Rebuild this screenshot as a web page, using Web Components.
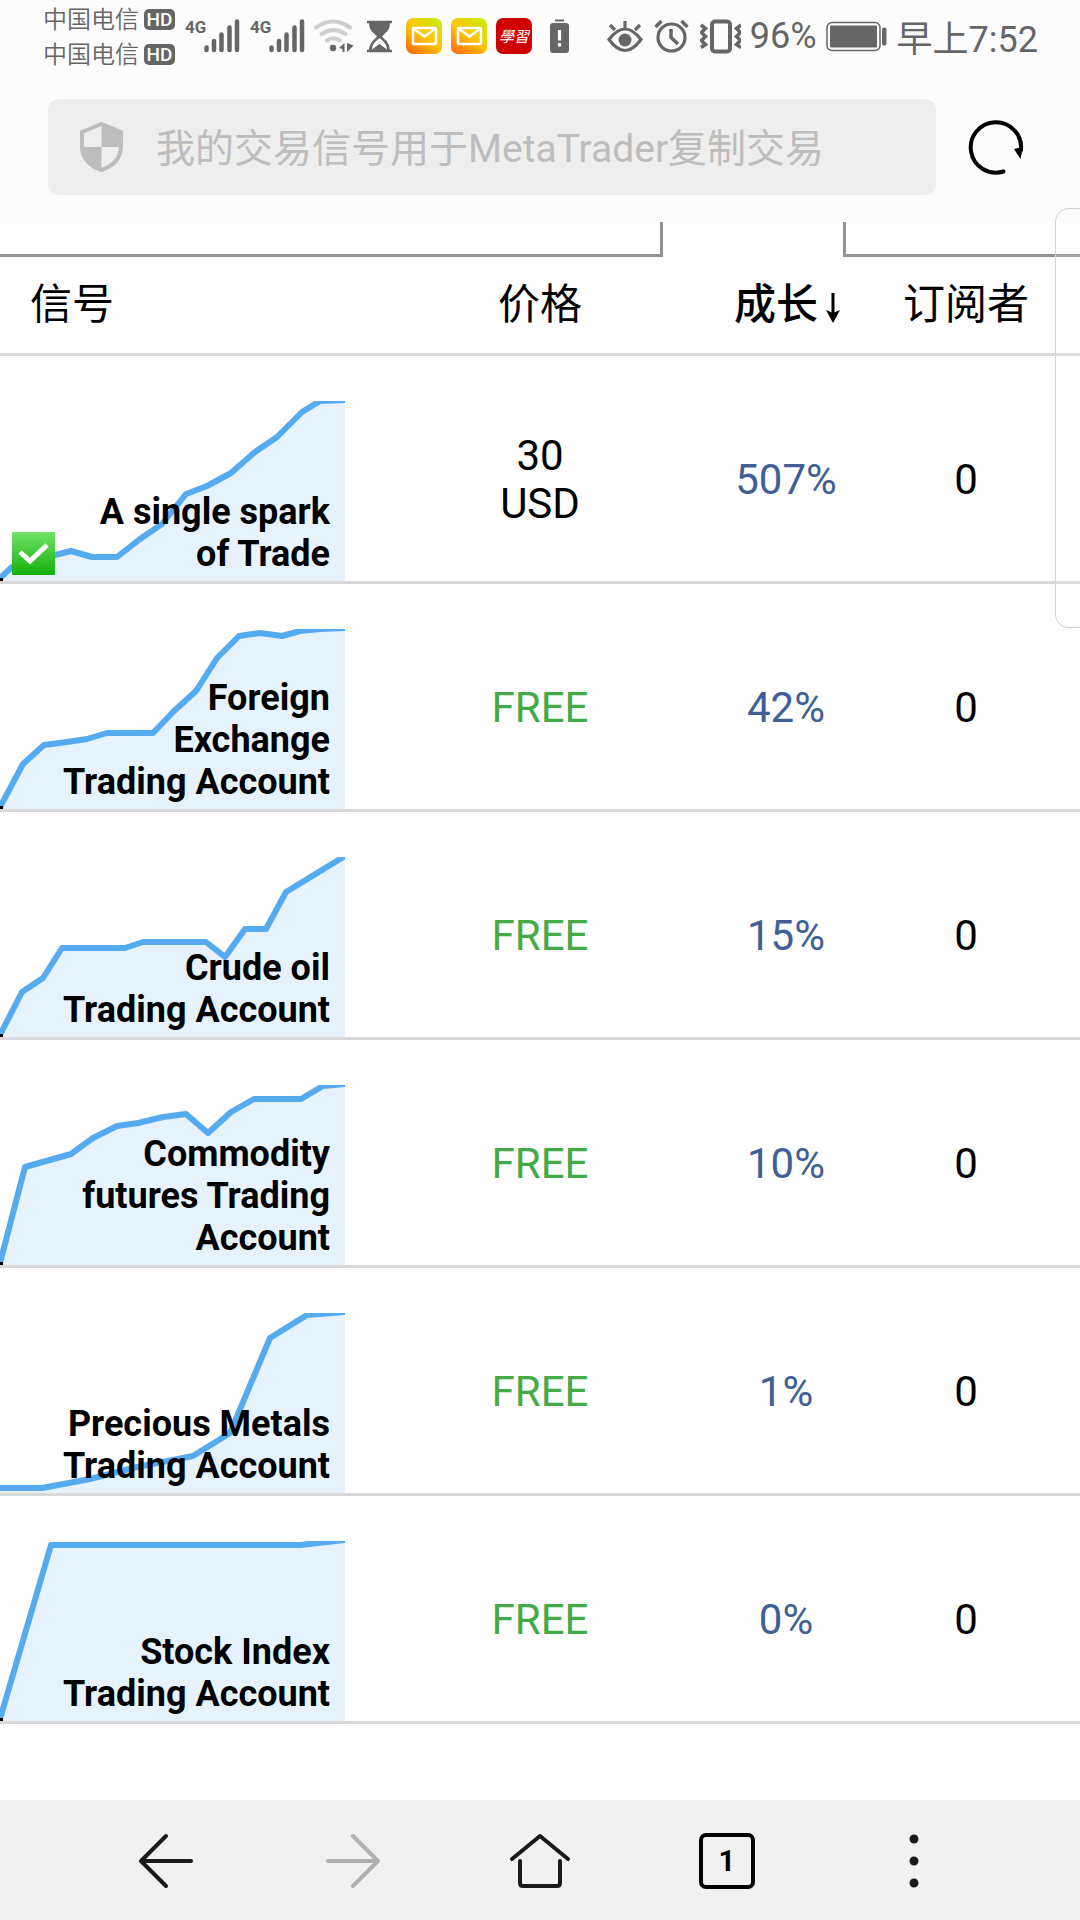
<!DOCTYPE html>
<html lang="zh-CN">
<head>
<meta charset="utf-8">
<meta name="viewport" content="width=device-width, initial-scale=1">
<title>我的交易信号用于MetaTrader复制交易</title>
<style>
    body {
        margin: 0;
        background: #fefefe;
        font-family: Roboto, "Noto Sans CJK SC", sans-serif;
    }
</style>
</head>
<body>

<app-shell>
    <status-bar slot="top"></status-bar>
    <address-bar slot="top" titulo="我的交易信号用于MetaTrader复制交易"></address-bar>
    <tab-strip></tab-strip>
    <signal-table></signal-table>
    <edge-panel></edge-panel>
    <tool-bar slot="bottom"></tool-bar>
</app-shell>

<script>
class Signal {
    constructor(name, price, growth, subscribers, points, verified = false) {
        this.name = name;
        this.price = price;
        this.growth = growth;
        this.subscribers = subscribers;
        this.points = points;
        this.verified = verified;
    }
}

const signals = [
    new Signal("A single spark of Trade", "30 USD", "507%", 0,
        "0,177 12,166 27,157 55,154 71,150 92,156 117,156 140,138 162,123 186,93 207,85 231,72 255,51 277,36 302,11 320,0 345,-1", true),
    new Signal("Foreign Exchange Trading Account", "FREE", "42%", 0,
        "0,178 23,135 44,116 67,113 87,110 107,104 153,104 173,83 196,62 217,29 239,7 260,4 282,7 300,2 320,0 345,-1"),
    new Signal("Crude oil Trading Account", "FREE", "15%", 0,
        "0,178 22,135 43,121 62,91 125,91 143,85 206,85 225,100 245,72 266,72 286,35 345,-1"),
    new Signal("Commodity futures Trading Account", "FREE", "10%", 0,
        "0,178 25,82 71,69 93,53 117,41 138,38 163,32 186,29 208,48 231,27 254,14 301,14 323,1 345,-1"),
    new Signal("Precious Metals Trading Account", "FREE", "1%", 0,
        "0,175 42,175 90,166 137,154 193,143 230,120 270,25 307,2 345,-1"),
    new Signal("Stock Index Trading Account", "FREE", "0%", 0,
        "0,178 51,4 300,4 345,-1")
];

class AppShell extends HTMLElement {
    constructor() {
        super();
        this.attachShadow({ mode: 'open' });
        this.shadowRoot.innerHTML = `
            <style>
                :host {
                    display: flex;
                    flex-direction: column;
                    min-height: 100vh;
                    position: relative;
                    overflow: hidden;
                }
                header { background: #fcfcfc; }
                main { flex: 1; }
            </style>
            <header><slot name="top"></slot></header>
            <main><slot></slot></main>
            <slot name="bottom"></slot>
        `;
    }
}

class StatusBar extends HTMLElement {
    constructor() {
        super();
        this.attachShadow({ mode: 'open' });

        const bars = `
            <svg width="56" height="56" viewBox="184 8 56 56">
                <text x="185" y="33" class="net">4G</text>
                <path d="M206.5 47.5v2.5M214 41v9M221.5 34.500v15.500M229.500 27.500v22.500M237 21.500v28.500"
                    stroke="currentColor" stroke-width="4.500" stroke-linecap="round"/>
            </svg>`;

        const mail = id => `
            <svg width="36" height="36" viewBox="0 0 36 36">
                <defs>
                    <linearGradient id="${id}" x1="0.1" y1="1" x2="0.8" y2="0">
                        <stop offset="0" stop-color="#ff6a10"/>
                        <stop offset="0.5" stop-color="#ffc20a"/>
                        <stop offset="1" stop-color="#cdea12"/>
                    </linearGradient>
                </defs>
                <rect width="36" height="36" rx="7" fill="url(#${id})"/>
                <rect x="7" y="10" width="23" height="16" rx="1" fill="none" stroke="#fff" stroke-width="2.500"/>
                <path d="M8 11l10.500 7.500L29 11" fill="none" stroke="#fff" stroke-width="2.500"/>
            </svg>`;

        this.shadowRoot.innerHTML = `
            <style>
                :host {
                    display: flex;
                    align-items: center;
                    justify-content: space-between;
                    height: 72px;
                    padding: 0 42px 0 43px;
                    color: #666;
                    font-size: 36px;
                    white-space: nowrap;
                }
                .group { display: flex; align-items: center; gap: 9px; }
                .carriers { display: grid; gap: 3px; font-size: 24px; line-height: 32px; font-weight: 350; padding-top: 2px; }
                .carriers div { display: flex; align-items: center; gap: 5px; }
                b {
                    width: 31px;
                    height: 21px;
                    border-radius: 5px;
                    background: #666;
                    color: #fcfcfc;
                    font-size: 19px;
                    line-height: 22px;
                    font-weight: 500;
                    text-align: center;
                }
                .net { font: bold 17px "Liberation Sans Narrow", Roboto, sans-serif; fill: currentColor; }
                .xue { font: 15px "Noto Sans CJK TC", sans-serif; font-style: italic; fill: #fff; }
                svg { display: block; flex: none; }
            </style>

            <div class="group">
                <div class="carriers">
                    <div><span>中国电信</span><b>HD</b></div>
                    <div><span>中国电信</span><b>HD</b></div>
                </div>
                ${bars}
                ${bars}
                <svg width="40" height="36" viewBox="314 18 40 36">
                    <path d="M316 27.500q17-12 34 0M321.500 34q12-8 24 0M327 40.500q6.500-4.500 13 0" fill="none"
                        stroke="#cfcfcf" stroke-width="4" stroke-linecap="round"/>
                    <circle cx="333" cy="48" r="3.200" fill="currentColor"/>
                    <path d="M339 48l5.500-5v9h-2v-3zM347 43l6.500 2.500-6.500 6.500z" fill="currentColor"/>
                </svg>
                <svg width="34" height="36" viewBox="363 18 34 36">
                    <path d="M367 22h25M367 51h25" stroke="currentColor" stroke-width="2.500"/>
                    <path d="M369 22h21c0 9-4 10-8 14.500c4 4 8 7 8 14.500h-21c0-7.500 4-10.500 8-14.500c-4-4.500-8-5.500-8-14.500z" fill="currentColor"/>
                    <path d="M379.500 38c-4 3.500-7.500 6-7.500 11.500l7.500-5.500 7.500 5.500c0-5.500-3.500-8-7.500-11.500z" fill="#fcfcfc"/>
                </svg>
                ${mail('mail-a')}
                ${mail('mail-b')}
                <svg width="36" height="36" viewBox="0 0 36 36">
                    <rect width="36" height="36" rx="7" fill="#d00000"/>
                    <text x="3" y="24" class="xue">學習</text>
                </svg>
                <svg width="37" height="36" viewBox="541 18 37 36">
                    <path d="M555 20.500h9" stroke="currentColor" stroke-width="2"/>
                    <rect x="550" y="23" width="19" height="30" rx="3" fill="currentColor"/>
                    <path d="M559.500 30v10.500M559.500 43v3.500" stroke="#fcfcfc" stroke-width="3.200"/>
                </svg>
            </div>

            <div class="group">
                <svg width="36" height="36" viewBox="609 18 36 36">
                    <path d="M611 39.500q8-10.500 16-10.500t16 10.500q-8 11-16 11t-16-11zM627 28v-7M617 30l-5-5M637 30l5-5"
                        fill="none" stroke="currentColor" stroke-width="3.200"/>
                    <circle cx="627" cy="40" r="6.500" fill="currentColor"/>
                </svg>
                <svg width="39" height="36" viewBox="654 18 39 36">
                    <circle cx="673.500" cy="37.500" r="13.500" fill="none" stroke="currentColor" stroke-width="3.200"/>
                    <path d="M673 29v8.500l7 6.500M657.500 27l6-6M689.500 27l-6-6" fill="none" stroke="currentColor" stroke-width="3.500"/>
                </svg>
                <svg width="41" height="36" viewBox="702 18 41 36">
                    <rect x="714" y="21.500" width="18" height="30" rx="3" fill="none" stroke="currentColor" stroke-width="4"/>
                    <path d="M703 25l4.500 3.500-4 4 4 4-4 4 4 4-4.500 3M743 25l-4.500 3.500 4 4-4 4 4 4-4 4 4.500 3"
                        fill="none" stroke="currentColor" stroke-width="3.500"/>
                </svg>
                <span>96%</span>
                <svg width="62" height="36" viewBox="826 18 62 36">
                    <rect x="827" y="22.500" width="53" height="28" rx="5" fill="none" stroke="currentColor" stroke-width="1.500"/>
                    <rect x="830" y="25.500" width="47" height="22" rx="1" fill="currentColor"/>
                    <rect x="882" y="27.500" width="4.500" height="18" rx="2" fill="currentColor"/>
                </svg>
                <time>早上7:52</time>
            </div>
        `;
    }
}

class AddressBar extends HTMLElement {
    constructor() {
        super();
        this.attachShadow({ mode: 'open' });
        this.shadowRoot.innerHTML = `
            <style>
                :host {
                    display: flex;
                    align-items: center;
                    gap: 30px;
                    padding: 27px 54px 27px 48px;
                }
                label {
                    flex: 1;
                    display: flex;
                    align-items: center;
                    gap: 33px;
                    height: 96px;
                    padding: 0 24px 0 32px;
                    border-radius: 10px;
                    background: #eee;
                    box-sizing: border-box;
                }
                input {
                    flex: 1;
                    min-width: 0;
                    padding: 4px 0 0;
                    border: 0;
                    outline: 0;
                    background: none;
                    color: #bdbdbd;
                    font: 400 39px/60px Roboto, "Noto Sans CJK SC", sans-serif;
                }
                button { padding: 0; border: 0; background: none; }
                svg { display: block; }
            </style>
            <label>
                <svg width="43" height="50" viewBox="0 0 43 50" aria-hidden="true">
                    <path d="M21.500 2L41 10v14c0 12-8 20-19.500 24C10 44 2 36 2 24V10z" fill="#eee" stroke="#bdbdbd" stroke-width="4"/>
                    <path d="M21.500 2L41 10v15H21.500zM21.500 25v23C10 44 2 36 2 25z" fill="#bdbdbd"/>
                </svg>
                <input type="text" aria-label="地址" value="${this.getAttribute('titulo')}">
            </label>
            <button aria-label="刷新">
                <svg width="60" height="60" viewBox="966 117 60 60">
                    <path d="M1003.500 171.500A25.200 25.200 0 1 1 1021 150" fill="none" stroke="#000" stroke-width="4" stroke-linecap="round"/>
                    <path d="M1014 149l9-2-2.500 12z"/>
                </svg>
            </button>
        `;
    }
}

class TabStrip extends HTMLElement {
    constructor() {
        super();
        this.attachShadow({ mode: 'open' });
        this.shadowRoot.innerHTML = `
            <style>
                :host {
                    display: grid;
                    grid-template-columns: 663fr 180fr 237fr;
                    height: 35px;
                }
                div { border-bottom: 3px solid #929292; }
                .before { border-right: 3px solid #929292; }
                .after { border-left: 3px solid #929292; grid-column: 3; }
            </style>
            <div class="before"></div>
            <div class="after"></div>
        `;
    }
}

/* growth curve with the signal name laid over it */
class SignalChart extends HTMLElement {
    constructor() {
        super();
        this.attachShadow({ mode: 'open' });
    }

    connectedCallback() {
        const points = this.getAttribute('points');
        const flat = points.startsWith('0,175');

        this.shadowRoot.innerHTML = `
            <style>
                :host {
                    display: grid;
                    width: 345px;
                    height: 180px;
                }
                svg { display: block; }
                .chart, .caption { grid-area: 1 / 1; }
                .caption {
                    display: flex;
                    align-items: flex-end;
                    padding: 0 15px 6px 12px;
                    z-index: 1;
                }
                a {
                    width: 268px;
                    margin-left: auto;
                    color: #000;
                    font-size: 36px;
                    line-height: 42px;
                    font-weight: 700;
                    text-align: right;
                    text-decoration: none;
                }
            </style>
            <svg class="chart" width="345" height="180" viewBox="0 0 345 180">
                <polygon points="${points} 345,180 0,180" fill="#e6f3fe"/>
                <polyline points="${points}" fill="none" stroke="#56aaf0" stroke-width="6" stroke-linejoin="round"/>
                ${flat ? '' : '<rect y="177" width="3" height="3"/>'}
            </svg>
            <div class="caption">
                ${this.hasAttribute('verified') ? `
                    <svg width="43" height="43" viewBox="0 0 43 43">
                        <defs>
                            <linearGradient id="green" x1="0" y1="0" x2="0" y2="1">
                                <stop offset="0" stop-color="#72e368"/>
                                <stop offset="1" stop-color="#12b00c"/>
                            </linearGradient>
                        </defs>
                        <rect width="43" height="43" rx="1" fill="url(#green)"/>
                        <path d="M8 20l10 9 17-16" fill="none" stroke="#fff" stroke-width="5"/>
                    </svg>` : ''}
                <a href="#"><slot></slot></a>
            </div>
        `;
    }
}

class SignalTable extends HTMLElement {
    constructor() {
        super();
        this.attachShadow({ mode: 'open' });
        this.render();
    }

    render() {
        this.shadowRoot.innerHTML = `
            <style>
                :host { display: block; }
                table {
                    width: 100%;
                    table-layout: fixed;
                    border-collapse: separate;
                    border-spacing: 0;
                    font-size: 42px;
                    line-height: 48px;
                    text-align: center;
                    color: #000;
                }
                .signal { width: 37.5%; }
                .price { width: 25%; }
                .edge { width: 45px; }
                .subs { width: 138px; }
                th, td {
                    box-sizing: border-box;
                    border-bottom: 3px solid #d8d8d8;
                }
                th {
                    height: 99px;
                    padding: 0;
                    font-weight: 400;
                    white-space: nowrap;
                }
                th:first-child { padding-left: 30px; text-align: left; }
                th.sorted { padding-left: 2px; font-weight: 500; }
                th svg { margin-left: 8px; vertical-align: -4px; }
                td { height: 228px; padding: 44px 84px 21px; }
                td:first-child { padding: 45px 0 0; }
                td:nth-child(n + 3) { padding-left: 0; padding-right: 0; }
                .free { color: #44a948; }
                .growth { color: #415f96; }
            </style>
            <table>
                <colgroup>
                    <col class="signal"><col class="price"><col><col class="subs"><col class="edge">
                </colgroup>
                <thead>
                    <tr>
                        <th>信号</th>
                        <th>价格</th>
                        <th class="sorted">成长<svg width="14" height="30" viewBox="0 0 14 30"><path d="M7 0v24" stroke="#000" stroke-width="3"/><path d="M0 17l7 3 7-3-7 13z"/></svg></th>
                        <th>订阅者</th>
                        <th></th>
                    </tr>
                </thead>
                <tbody>
                    ${signals.map(s => `
                        <tr>
                            <td><signal-chart points="${s.points}" ${s.verified ? 'verified' : ''}>${s.name}</signal-chart></td>
                            <td class="${s.price === 'FREE' ? 'free' : ''}">${s.price}</td>
                            <td class="growth">${s.growth}</td>
                            <td>${s.subscribers}</td>
                            <td></td>
                        </tr>
                    `).join('')}
                </tbody>
            </table>
        `;
    }
}

/* handle of the side drawer, floats over the page at the right edge */
class EdgePanel extends HTMLElement {
    constructor() {
        super();
        this.attachShadow({ mode: 'open' });
        this.shadowRoot.innerHTML = `
            <style>
                :host {
                    position: absolute;
                    top: 208px;
                    right: 0;
                    width: 25px;
                    height: 420px;
                    box-sizing: border-box;
                    border: 1px solid #d4d4d4;
                    border-right: 0;
                    border-radius: 14px 0 0 14px;
                    background: rgba(255, 255, 255, 0.15);
                }
            </style>
        `;
    }
}

class ToolBar extends HTMLElement {
    constructor() {
        super();
        this.attachShadow({ mode: 'open' });
        this.shadowRoot.innerHTML = `
            <style>
                :host {
                    display: flex;
                    height: 120px;
                    padding: 2px 73px 0;
                    box-sizing: border-box;
                    background: #f1f1f1;
                }
                button {
                    flex: 1;
                    display: flex;
                    align-items: center;
                    justify-content: center;
                    padding: 0;
                    border: 0;
                    background: none;
                    color: #1a1a1a;
                }
                button:disabled { color: #b0b0b0; }
                svg { fill: none; stroke: currentColor; stroke-width: 4; stroke-linecap: round; stroke-linejoin: round; }
                .count {
                    width: 56px;
                    height: 56px;
                    box-sizing: border-box;
                    border: 4px solid #000;
                    border-radius: 7px;
                    color: #000;
                    font: bold 29px/48px Roboto, sans-serif;
                }
            </style>
            <button aria-label="后退">
                <svg width="56" height="56" viewBox="0 0 56 56"><path d="M28 3L3 28l25 25M4 28h49"/></svg>
            </button>
            <button aria-label="前进" disabled>
                <svg width="56" height="56" viewBox="0 0 56 56"><path d="M28 3l25 25-25 25M52 28H3"/></svg>
            </button>
            <button aria-label="主页">
                <svg width="62" height="56" viewBox="0 0 62 56"><path d="M3 26L31 3l28 23M11 28v22q0 3 3 3h34q3 0 3-3V28"/></svg>
            </button>
            <button aria-label="标签页"><span class="count">1</span></button>
            <button aria-label="菜单">
                <svg width="10" height="56" viewBox="0 0 10 56"><path d="M5 6h0M5 28h0M5 50h0" stroke-width="9"/></svg>
            </button>
        `;
    }
}

customElements.define('app-shell', AppShell);
customElements.define('status-bar', StatusBar);
customElements.define('address-bar', AddressBar);
customElements.define('tab-strip', TabStrip);
customElements.define('signal-chart', SignalChart);
customElements.define('signal-table', SignalTable);
customElements.define('edge-panel', EdgePanel);
customElements.define('tool-bar', ToolBar);
</script>
</body>
</html>
